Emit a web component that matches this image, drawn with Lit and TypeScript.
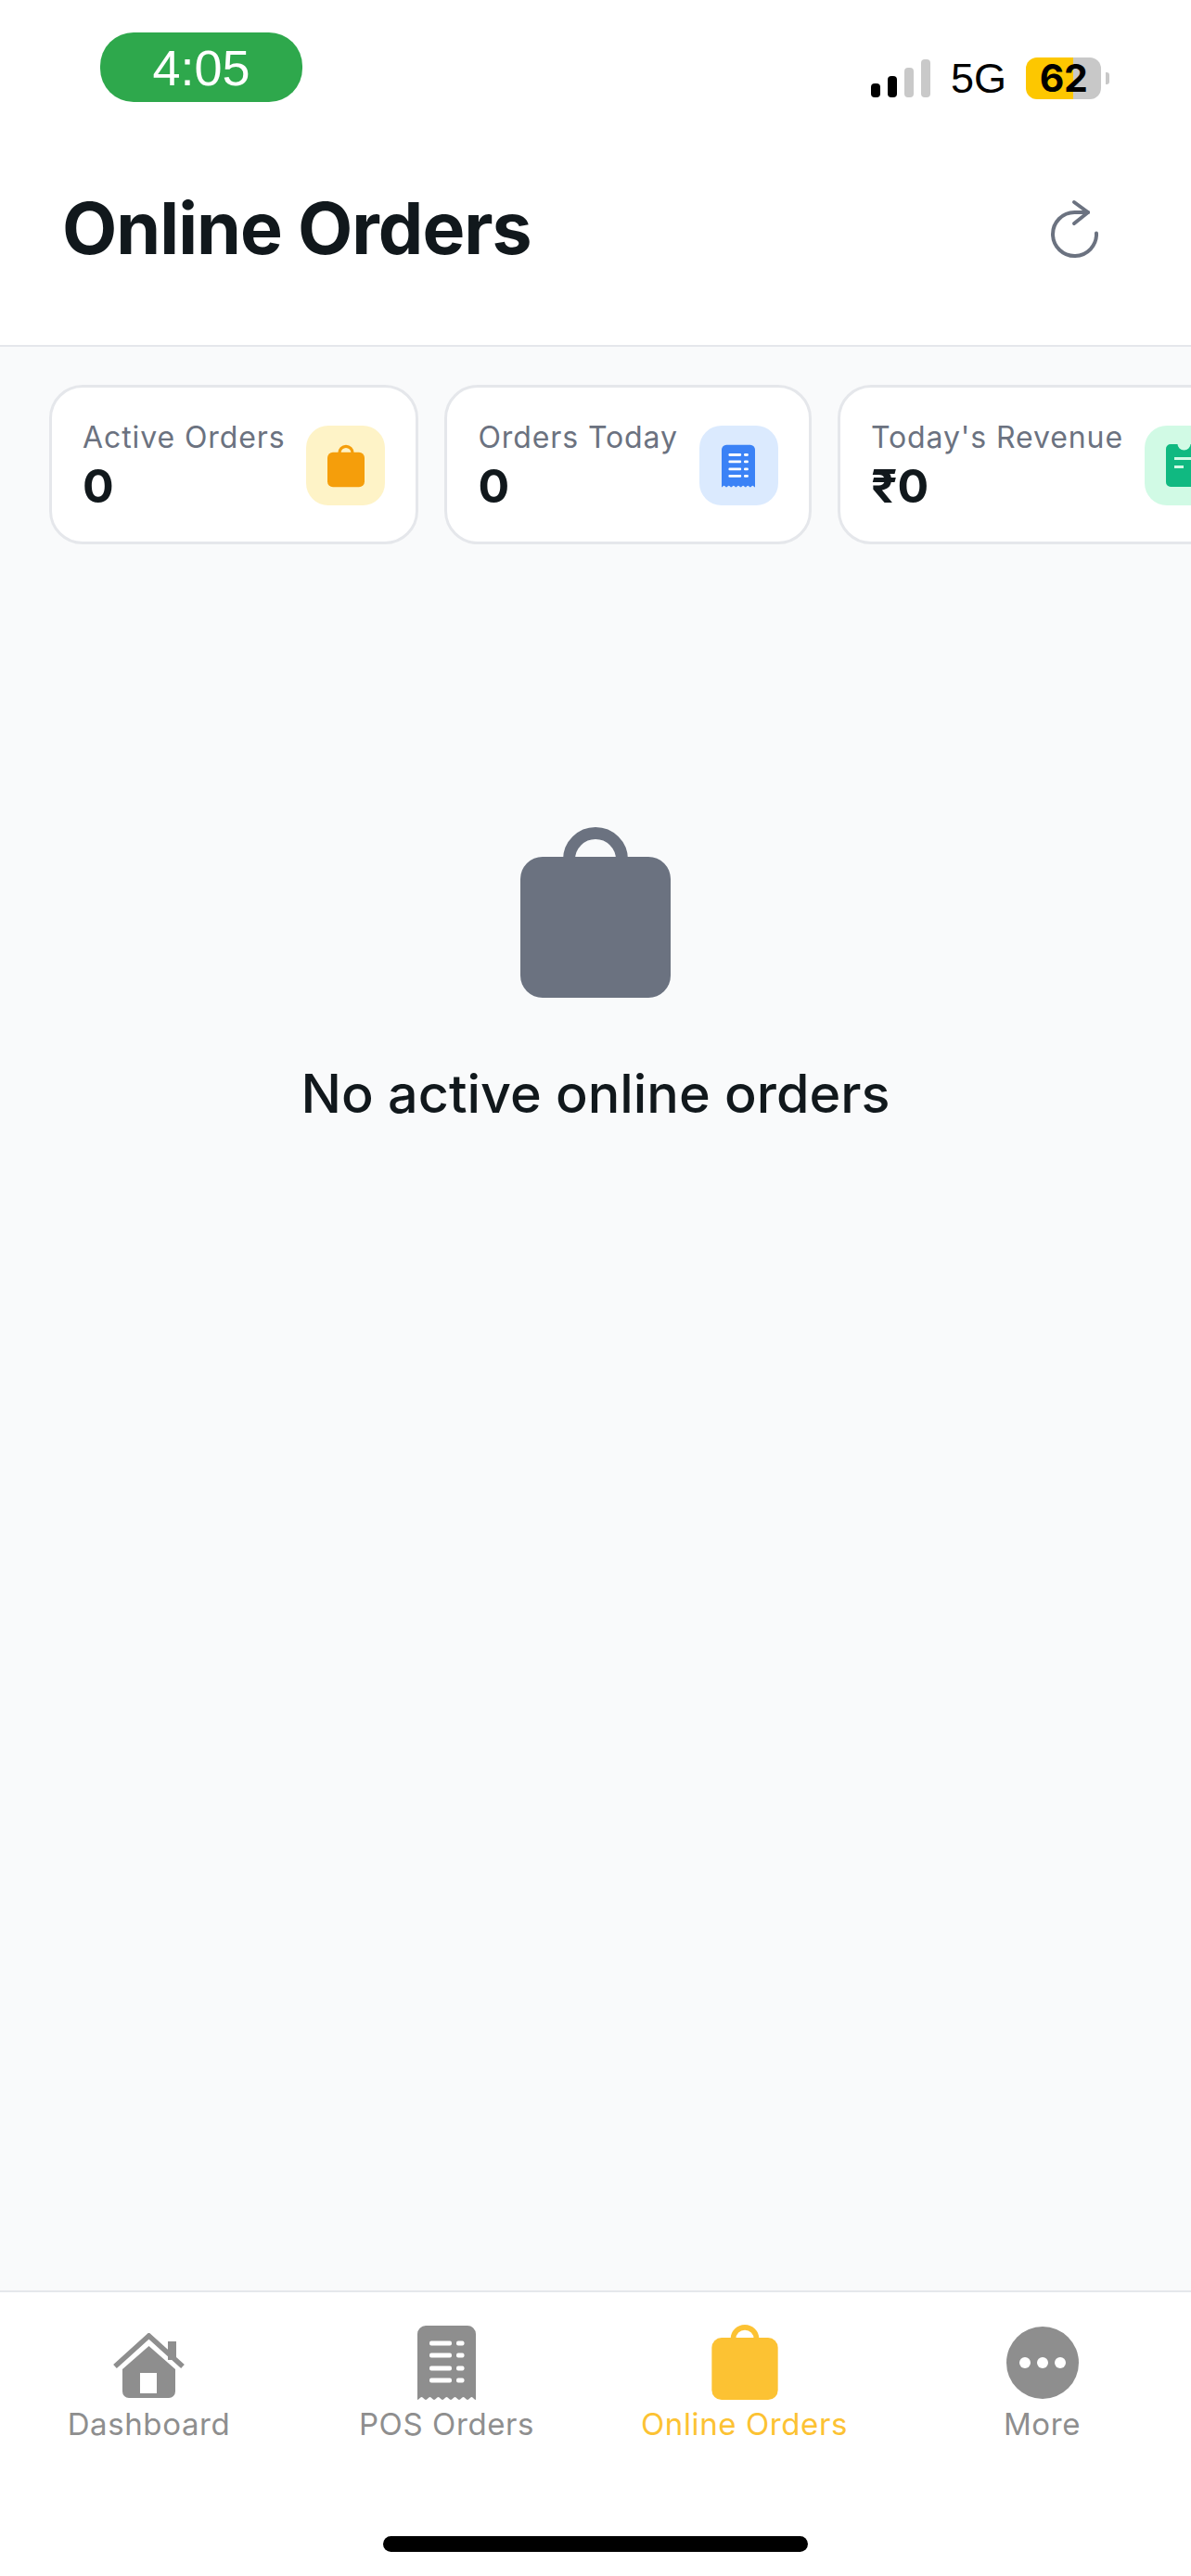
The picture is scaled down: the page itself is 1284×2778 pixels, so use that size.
import { LitElement, html, css, svg } from "lit";
import { customElement } from "lit/decorators.js";

const bag = (cls: string) => html`<svg class=${cls} viewBox="0 0 162 184" aria-hidden="true">
  <path d="M52.5 35A28.5 28.5 0 0 1 109.5 35V40H52.5Z" fill="none" stroke="currentColor" stroke-width="13"/>
  <rect x="0" y="32" width="162" height="152" rx="24" fill="currentColor"/>
</svg>`;

const scallop = svg`<path fill="currentColor" d="M0 9a9 9 0 0 1 9-9h45a9 9 0 0 1 9 9v71c-2 0-3-3-4.500-3s-3 3-4.500 3-3-3-4.500-3-3 3-4.500 3-3-3-4.500-3-3 3-4.500 3-3-3-4.500-3-3 3-4.500 3-3-3-4.500-3-3 3-4.500 3-3-3-4.500-3-3 3-4.500 3-3-3-4.500-3-3 3-4.500 3z"/>`;

const receipt = (cls: string) => html`<svg class=${cls} viewBox="0 0 63 80" aria-hidden="true">
  ${scallop}
  ${[19, 32, 46, 59].map(
    (y) => svg`<rect x="13" y=${y - 2.5} width="24" height="5" rx="2" fill="#fff"/><rect x="42" y=${y - 2.5} width="8.500" height="5" rx="2" fill="#fff"/>`
  )}
</svg>`;

const home = html`<svg class="nav-home" viewBox="0 0 77 70" aria-hidden="true">
  <path fill="currentColor" d="M59 9h9v20h-9z"/>
  <path d="M2 36L38.500 3L75 36" fill="none" stroke="currentColor" stroke-width="5.500"/>
  <path fill="currentColor" fill-rule="evenodd" d="M38.500 14L67 39V63a7 7 0 0 1-7 7H17a7 7 0 0 1-7-7V39ZM29 43V65H47V43Z"/>
</svg>`;

const more = html`<svg class="nav-more" viewBox="0 0 78 78" aria-hidden="true">
  <circle cx="39" cy="39" r="39" fill="currentColor"/>
  <circle cx="20" cy="39" r="6" fill="#fff"/><circle cx="39" cy="39" r="6" fill="#fff"/><circle cx="58" cy="39" r="6" fill="#fff"/>
</svg>`;

const revenue = html`<svg class="stat-glyph" viewBox="0 0 39 46" aria-hidden="true">
  <path fill="#10b981" d="M5 0h7.500a7 6.500 0 0 0 14 0H34a5 5 0 0 1 5 5v36a5 5 0 0 1-5 5H5a5 5 0 0 1-5-5V5a5 5 0 0 1 5-5Z"/>
  <rect x="9" y="14" width="21" height="3" fill="#d1fae5"/>
  <rect x="9" y="23" width="10" height="3" fill="#d1fae5"/>
</svg>`;

@customElement("app-root")
export class AppRoot extends LitElement {
  static styles = css`
    :host {
      display: flex;
      flex-direction: column;
      width: 1284px;
      height: 2778px;
      overflow: hidden;
      background: #f9fafb;
      font-family: Inter, "Liberation Sans", sans-serif;
      color: #11181c;
    }
    .top {
      height: 372px;
      flex: none;
      background: #fff;
      border-bottom: 2px solid #e5e7eb;
      display: flex;
      flex-direction: column;
    }
    .status {
      height: 75px;
      margin-top: 35px;
      padding: 0 88px 0 108px;
      display: flex;
      justify-content: space-between;
      align-items: flex-start;
    }
    .time {
      width: 218px;
      height: 75px;
      border-radius: 36px;
      background: #2ea84c;
      color: #fff;
      font: 400 54px/76px "Liberation Sans", sans-serif;
      text-align: center;
    }
    .sys {
      display: flex;
      align-items: center;
      margin-top: 27px;
      height: 45px;
    }
    .bars {
      display: flex;
      align-items: flex-end;
      gap: 7.500px;
      height: 41px;
      margin-right: 22px;
    }
    .bars i {
      width: 10.500px;
      border-radius: 4px;
      background: #c9c9c9;
    }
    .bars i.on {
      background: #000;
    }
    .b1 { height: 15px; }
    .b2 { height: 23px; }
    .b3 { height: 32px; }
    .b4 { height: 41px; }
    .net {
      font: 400 45px/45px "Liberation Sans", sans-serif;
      color: #000;
      width: 81px;
    }
    .battery {
      width: 81px;
      height: 45px;
      border-radius: 12px;
      background: linear-gradient(90deg, #fdc700 0 51px, #c8c8c8 51px);
      color: #000;
      font: 700 41px/45px Inter, sans-serif;
      text-align: center;
      letter-spacing: -0.5px;
    }
    .nub {
      width: 4px;
      height: 13px;
      margin-left: 5px;
      border-radius: 0 3px 3px 0;
      background: #c8c8c8;
    }
    .head {
      flex: 1;
      padding: 10px 97px 0 67px;
      display: flex;
      align-items: center;
      justify-content: space-between;
    }
    h1 {
      margin: 0;
      font-size: 77px;
      line-height: 90px;
      font-weight: 700;
      letter-spacing: -1px;
    }
    .refresh {
      width: 56px;
      height: 65px;
      color: #6b7280;
    }
    .stats {
      flex: none;
      display: flex;
      gap: 28px;
      margin-top: 41px;
      padding-left: 53px;
      overflow: hidden;
    }
    .stat {
      flex: none;
      height: 172px;
      box-sizing: border-box;
      padding: 34px 33px 0 33px;
      display: flex;
      gap: 23px;
      background: #fff;
      border: 3px solid #e5e7eb;
      border-radius: 36px;
    }
    .stat .label {
      font-size: 32px;
      line-height: 40px;
      color: #6b7280;
      letter-spacing: 0.9px;
      white-space: nowrap;
    }
    .stat .value {
      font-size: 50px;
      line-height: 60px;
      font-weight: 700;
      margin-top: 2px;
    }
    .glyph-box {
      flex: none;
      width: 85px;
      height: 86px;
      margin-top: 7px;
      border-radius: 24px;
      display: flex;
      align-items: center;
      justify-content: center;
    }
    .amber { background: #fef3c7; color: #f59e0b; }
    .blue { background: #dbeafe; color: #3b82f6; }
    .green { background: #d1fae5; color: #10b981; }
    .stat-glyph {
      width: 40px;
      height: 47px;
      display: block;
    }
    .green .stat-glyph {
      width: 39px;
      height: 46px;
    }
    .blue .stat-glyph {
      width: 36px;
    }
    main {
      flex: 1;
      min-height: 0;
      padding-top: 305px;
      display: flex;
      flex-direction: column;
      align-items: center;
    }
    .empty-bag {
      width: 162px;
      height: 184px;
      color: #6b7280;
      display: block;
    }
    .empty-text {
      margin-top: 69px;
      font-size: 57.500px;
      line-height: 68px;
      font-weight: 500;
    }
    nav {
      flex: none;
      height: 306px;
      background: #fff;
      border-top: 2px solid #e5e7eb;
      display: flex;
      flex-direction: column;
    }
    .tabs {
      display: grid;
      grid-template-columns: repeat(4, 1fr);
      padding-top: 35px;
    }
    .tab {
      display: flex;
      flex-direction: column;
      align-items: center;
      color: #8e8e8e;
      font-size: 33px;
      line-height: 40px;
      letter-spacing: 0.6px;
    }
    .tab.active {
      color: #fcc233;
    }
    .slot {
      height: 81px;
      margin-bottom: 6px;
      display: flex;
      align-items: center;
      justify-content: center;
    }
    .nav-home { width: 77px; height: 70px; display: block; margin-top: 6px; }
    .nav-receipt { width: 63px; height: 80px; display: block; }
    .nav-bag { width: 72px; height: 81px; display: block; }
    .nav-more { width: 78px; height: 78px; display: block; }
    .indicator {
      width: 458px;
      height: 17px;
      border-radius: 9px;
      background: #000;
      align-self: center;
      margin-top: auto;
      margin-bottom: 26px;
    }
  `;

  render() {
    return html`
      <div class="top">
        <div class="status">
          <div class="time">4:05</div>
          <div class="sys">
            <div class="bars"><i class="b1 on"></i><i class="b2 on"></i><i class="b3"></i><i class="b4"></i></div>
            <div class="net">5G</div>
            <div class="battery">62</div>
            <div class="nub"></div>
          </div>
        </div>
        <header class="head">
          <h1>Online Orders</h1>
          <svg class="refresh" viewBox="0 0 56 65" fill="none" stroke="currentColor" stroke-width="4" stroke-linecap="round" stroke-linejoin="round" aria-hidden="true">
            <path d="M42 15H27.500A23.500 23.500 0 1 0 51 37.500"/>
            <path d="M27 4L42 15L27 27"/>
          </svg>
        </header>
      </div>
      <section class="stats">
        <div class="stat">
          <div><div class="label">Active Orders</div><div class="value">0</div></div>
          <div class="glyph-box amber">${bag("stat-glyph")}</div>
        </div>
        <div class="stat">
          <div><div class="label">Orders Today</div><div class="value">0</div></div>
          <div class="glyph-box blue">${receipt("stat-glyph")}</div>
        </div>
        <div class="stat">
          <div><div class="label">Today's Revenue</div><div class="value">₹0</div></div>
          <div class="glyph-box green">${revenue}</div>
        </div>
      </section>
      <main>
        ${bag("empty-bag")}
        <div class="empty-text">No active online orders</div>
      </main>
      <nav>
        <div class="tabs">
          <div class="tab"><div class="slot">${home}</div>Dashboard</div>
          <div class="tab"><div class="slot">${receipt("nav-receipt")}</div>POS Orders</div>
          <div class="tab active"><div class="slot">${bag("nav-bag")}</div>Online Orders</div>
          <div class="tab"><div class="slot">${more}</div>More</div>
        </div>
        <div class="indicator"></div>
      </nav>
    `;
  }
}
